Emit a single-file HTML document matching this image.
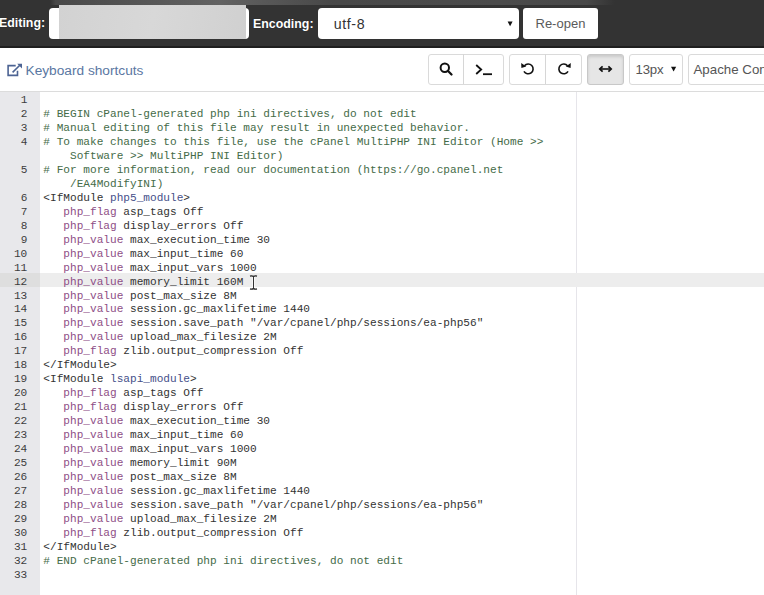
<!DOCTYPE html>
<html><head><meta charset="utf-8">
<style>
*{box-sizing:border-box}
html,body{margin:0;padding:0;width:764px;height:595px;overflow:hidden;background:#fff;font-family:"Liberation Sans",sans-serif}
#bar{position:absolute;left:0;top:0;width:764px;height:48px;background:#333}
#bar .bl{position:absolute;left:0;top:46px;width:764px;height:2px;background:#1f1f1f}
#bar .glow{position:absolute;left:50px;top:0;width:565px;height:5px;background:linear-gradient(to right,rgba(125,125,125,0),rgba(110,110,110,.35) 1%,rgba(120,120,120,.45) 12%,rgba(130,130,130,.6) 30%,rgba(120,120,120,.3) 50%,rgba(120,120,120,.35) 80%,rgba(120,120,120,.3) 95%,rgba(120,120,120,0));}
.lbl{position:absolute;color:#fff;font-weight:bold;font-size:12.4px;top:15px;line-height:16px;text-shadow:0 0 1px rgba(0,0,0,.5)}
.inp{position:absolute;background:#fff;border-radius:4px}
#blur{position:absolute;left:59px;top:5px;width:187px;height:34px;background:linear-gradient(100deg,#d2d2d2,#d8d8d8 50%,#d0d0d0)}
.sel-t{position:absolute;color:#333;font-size:14.6px;line-height:18px}
.caret{position:absolute;width:0;height:0;border-left:3px solid transparent;border-right:3px solid transparent;border-top:5px solid #222}
#tb{position:absolute;left:0;top:48px;width:764px;height:44px;background:#fff}
#tb .line{position:absolute;left:0;top:42.5px;width:764px;height:1.5px;background:#dcdcdc}
.kb{position:absolute;left:25.5px;top:13.5px;font-size:13.7px;color:#5a77a2;line-height:18px}
.btn{position:absolute;top:5.5px;height:31px;border:1px solid #dadada;border-radius:3px;background:#fff}
.btn.act{background:#e6e6e6;border-color:#c8c8c8;box-shadow:inset 0 2px 3px rgba(0,0,0,.12)}
.div{position:absolute;top:6px;width:1px;height:30px;background:#d6d6d6}
.bt{position:absolute;font-size:13px;color:#555;line-height:18px;white-space:nowrap}
#ed{position:absolute;left:0;top:92px;width:764px;height:503px;background:#fff;overflow:hidden}
#gut{position:absolute;left:0;top:0;width:39.6px;height:503px;background:#e8e8eb}
#pm{position:absolute;left:575.6px;top:0;width:1px;height:503px;background:#e6e5ea}
#al{position:absolute;left:0;width:764px;height:14px;background:#ededed}
#gal{position:absolute;left:0;width:40px;height:14px;background:#dedede}
.r,.g{position:absolute;height:14px;line-height:14px;font-family:"Liberation Mono",monospace;font-size:11.12px;white-space:pre;color:#333}
.r{left:43.3px}
.g{left:0;width:27.3px;text-align:right;color:#3d3d3d}
.c{color:#456b48}
.k{color:#8e4e86}
.m{color:#46508a}
.t{color:#333}
</style></head><body>
<div id="bar">
  <div class="glow"></div>
  <div class="bl"></div>
  <div class="lbl" style="left:-1px">Editing:</div>
  <div class="inp" style="left:49px;top:8px;width:200px;height:31px"></div>
  <div id="blur"></div>
  <div class="lbl" style="left:253px;top:15.5px">Encoding:</div>
  <div class="inp" style="left:318px;top:8px;width:201px;height:31px"></div>
  <div class="sel-t" style="left:333.8px;top:15.4px;letter-spacing:0.6px;font-size:14.2px">utf-8</div>
  <svg style="position:absolute;left:507px;top:20.5px" width="7" height="6" viewBox="0 0 7 6"><path d="M0.6 0.5H5.6L3.1 5.2Z" fill="#111"/></svg>
  <div class="inp" style="left:522.5px;top:7.5px;width:75.5px;height:31.5px;border-radius:3px"></div>
  <div class="bt" style="left:535.5px;top:15px;font-size:13px;color:#5a5a5a">Re-open</div>
</div>
<div id="tb">
  <div class="line"></div>
  <svg style="position:absolute;left:6px;top:15px" width="17" height="15" viewBox="0 0 17 15">
    <path d="M9.7 2.6H2.1V12.4H11.5V7.7" fill="none" stroke="#4c6393" stroke-width="1.6"/>
    <path d="M6.6 9.4L13.8 2.2" fill="none" stroke="#4c6393" stroke-width="1.6"/>
    <path d="M11.2 0.7H16V5.4Z" fill="#4c6393"/>
  </svg>
  <div class="kb">Keyboard shortcuts</div>

  <div class="btn" style="left:427.5px;width:76px"></div>
  <div class="div" style="left:463px"></div>
  <svg style="position:absolute;left:439px;top:14.4px" width="14" height="14" viewBox="0 0 14 14">
    <circle cx="5.8" cy="5.8" r="4.2" fill="none" stroke="#111" stroke-width="2"/>
    <path d="M8.8 8.8L12.5 12.5" stroke="#111" stroke-width="2.2" stroke-linecap="round"/>
  </svg>
  <svg style="position:absolute;left:475px;top:15.6px" width="18" height="12" viewBox="0 0 18 12">
    <path d="M1.2 1L6.2 5.5L1.2 10" fill="none" stroke="#111" stroke-width="1.8"/>
    <path d="M8 10.2H17" stroke="#111" stroke-width="1.8"/>
  </svg>

  <div class="btn" style="left:509px;width:73px"></div>
  <div class="div" style="left:544.8px"></div>
  <svg style="position:absolute;left:520px;top:14px" width="15" height="15" viewBox="0 0 15 15">
    <path d="M4.45 3.75A4.9 4.9 0 1 1 3.96 9.35" fill="none" stroke="#111" stroke-width="1.6"/><path d="M1.2 0.9L1.4 5.9L6.2 4.6Z" fill="#111"/>
  </svg>
  <svg style="position:absolute;left:556.5px;top:14px" width="15" height="15" viewBox="0 0 15 15">
    <g transform="translate(15,0) scale(-1,1)"><path d="M4.45 3.75A4.9 4.9 0 1 1 3.96 9.35" fill="none" stroke="#111" stroke-width="1.6"/><path d="M1.2 0.9L1.4 5.9L6.2 4.6Z" fill="#111"/></g>
  </svg>

  <div class="btn act" style="left:587px;width:37px"></div>
  <svg style="position:absolute;left:598px;top:17px" width="15" height="8" viewBox="0 0 15 8">
    <path d="M2.5 4H12.5" stroke="#111" stroke-width="1.6"/>
    <path d="M4.6 1.4L1.8 4L4.6 6.6M10.4 1.4L13.2 4L10.4 6.6" fill="none" stroke="#111" stroke-width="1.7"/>
  </svg>

  <div class="btn" style="left:629px;width:54px"></div>
  <div class="bt" style="left:635.5px;top:13px;font-size:13.2px;letter-spacing:-0.2px">13px</div>
  <svg style="position:absolute;left:670px;top:18px" width="7" height="6" viewBox="0 0 7 6"><path d="M1 0.8H6.2L3.6 5.4Z" fill="#111"/></svg>

  <div class="btn" style="left:688px;width:90px"></div>
  <div class="bt" style="left:693.5px;top:13.2px;font-size:13.3px">Apache Configuration</div>
</div>
<div id="ed">
  <div id="gut"></div>
  <div id="pm"></div>
  <div id="al" style="top:calc(272.95px - 92px)"></div>
  <div id="gal" style="top:calc(272.95px - 92px)"></div>
  <div id="code" style="position:absolute;left:0;top:-92px;width:764px;height:595px">
<div class="r" style="top:93.20px"></div>
<div class="r" style="top:107.15px"><span class="c">#&#160;BEGIN&#160;cPanel-generated&#160;php&#160;ini&#160;directives,&#160;do&#160;not&#160;edit</span></div>
<div class="r" style="top:121.10px"><span class="c">#&#160;Manual&#160;editing&#160;of&#160;this&#160;file&#160;may&#160;result&#160;in&#160;unexpected&#160;behavior.</span></div>
<div class="r" style="top:135.05px"><span class="c">#&#160;To&#160;make&#160;changes&#160;to&#160;this&#160;file,&#160;use&#160;the&#160;cPanel&#160;MultiPHP&#160;INI&#160;Editor&#160;(Home&#160;&gt;&gt;</span></div>
<div class="r" style="top:149.00px"><span class="c">&#160;&#160;&#160;&#160;Software&#160;&gt;&gt;&#160;MultiPHP&#160;INI&#160;Editor)</span></div>
<div class="r" style="top:162.95px"><span class="c">#&#160;For&#160;more&#160;information,&#160;read&#160;our&#160;documentation&#160;(https://go.cpanel.net</span></div>
<div class="r" style="top:176.90px"><span class="c">&#160;&#160;&#160;&#160;/EA4ModifyINI)</span></div>
<div class="r" style="top:190.85px"><span class="t">&lt;IfModule&#160;</span><span class="m">php5_module</span><span class="t">&gt;</span></div>
<div class="r" style="top:204.80px"><span class="t">&#160;&#160;&#160;</span><span class="k">php_flag</span><span class="t">&#160;asp_tags&#160;Off</span></div>
<div class="r" style="top:218.75px"><span class="t">&#160;&#160;&#160;</span><span class="k">php_flag</span><span class="t">&#160;display_errors&#160;Off</span></div>
<div class="r" style="top:232.70px"><span class="t">&#160;&#160;&#160;</span><span class="k">php_value</span><span class="t">&#160;max_execution_time&#160;30</span></div>
<div class="r" style="top:246.65px"><span class="t">&#160;&#160;&#160;</span><span class="k">php_value</span><span class="t">&#160;max_input_time&#160;60</span></div>
<div class="r" style="top:260.60px"><span class="t">&#160;&#160;&#160;</span><span class="k">php_value</span><span class="t">&#160;max_input_vars&#160;1000</span></div>
<div class="r" style="top:274.55px"><span class="t">&#160;&#160;&#160;</span><span class="k">php_value</span><span class="t">&#160;memory_limit&#160;160M</span></div>
<div class="r" style="top:288.50px"><span class="t">&#160;&#160;&#160;</span><span class="k">php_value</span><span class="t">&#160;post_max_size&#160;8M</span></div>
<div class="r" style="top:302.45px"><span class="t">&#160;&#160;&#160;</span><span class="k">php_value</span><span class="t">&#160;session.gc_maxlifetime&#160;1440</span></div>
<div class="r" style="top:316.40px"><span class="t">&#160;&#160;&#160;</span><span class="k">php_value</span><span class="t">&#160;session.save_path&#160;&quot;/var/cpanel/php/sessions/ea-php56&quot;</span></div>
<div class="r" style="top:330.35px"><span class="t">&#160;&#160;&#160;</span><span class="k">php_value</span><span class="t">&#160;upload_max_filesize&#160;2M</span></div>
<div class="r" style="top:344.30px"><span class="t">&#160;&#160;&#160;</span><span class="k">php_flag</span><span class="t">&#160;zlib.output_compression&#160;Off</span></div>
<div class="r" style="top:358.25px"><span class="t">&lt;/IfModule&gt;</span></div>
<div class="r" style="top:372.20px"><span class="t">&lt;IfModule&#160;</span><span class="m">lsapi_module</span><span class="t">&gt;</span></div>
<div class="r" style="top:386.15px"><span class="t">&#160;&#160;&#160;</span><span class="k">php_flag</span><span class="t">&#160;asp_tags&#160;Off</span></div>
<div class="r" style="top:400.10px"><span class="t">&#160;&#160;&#160;</span><span class="k">php_flag</span><span class="t">&#160;display_errors&#160;Off</span></div>
<div class="r" style="top:414.05px"><span class="t">&#160;&#160;&#160;</span><span class="k">php_value</span><span class="t">&#160;max_execution_time&#160;30</span></div>
<div class="r" style="top:428.00px"><span class="t">&#160;&#160;&#160;</span><span class="k">php_value</span><span class="t">&#160;max_input_time&#160;60</span></div>
<div class="r" style="top:441.95px"><span class="t">&#160;&#160;&#160;</span><span class="k">php_value</span><span class="t">&#160;max_input_vars&#160;1000</span></div>
<div class="r" style="top:455.90px"><span class="t">&#160;&#160;&#160;</span><span class="k">php_value</span><span class="t">&#160;memory_limit&#160;90M</span></div>
<div class="r" style="top:469.85px"><span class="t">&#160;&#160;&#160;</span><span class="k">php_value</span><span class="t">&#160;post_max_size&#160;8M</span></div>
<div class="r" style="top:483.80px"><span class="t">&#160;&#160;&#160;</span><span class="k">php_value</span><span class="t">&#160;session.gc_maxlifetime&#160;1440</span></div>
<div class="r" style="top:497.75px"><span class="t">&#160;&#160;&#160;</span><span class="k">php_value</span><span class="t">&#160;session.save_path&#160;&quot;/var/cpanel/php/sessions/ea-php56&quot;</span></div>
<div class="r" style="top:511.70px"><span class="t">&#160;&#160;&#160;</span><span class="k">php_value</span><span class="t">&#160;upload_max_filesize&#160;2M</span></div>
<div class="r" style="top:525.65px"><span class="t">&#160;&#160;&#160;</span><span class="k">php_flag</span><span class="t">&#160;zlib.output_compression&#160;Off</span></div>
<div class="r" style="top:539.60px"><span class="t">&lt;/IfModule&gt;</span></div>
<div class="r" style="top:553.55px"><span class="c">#&#160;END&#160;cPanel-generated&#160;php&#160;ini&#160;directives,&#160;do&#160;not&#160;edit</span></div>
<div class="r" style="top:567.50px"></div>
<div class="g" style="top:93.20px">1</div>
<div class="g" style="top:107.15px">2</div>
<div class="g" style="top:121.10px">3</div>
<div class="g" style="top:135.05px">4</div>
<div class="g" style="top:162.95px">5</div>
<div class="g" style="top:190.85px">6</div>
<div class="g" style="top:204.80px">7</div>
<div class="g" style="top:218.75px">8</div>
<div class="g" style="top:232.70px">9</div>
<div class="g" style="top:246.65px">10</div>
<div class="g" style="top:260.60px">11</div>
<div class="g" style="top:274.55px">12</div>
<div class="g" style="top:288.50px">13</div>
<div class="g" style="top:302.45px">14</div>
<div class="g" style="top:316.40px">15</div>
<div class="g" style="top:330.35px">16</div>
<div class="g" style="top:344.30px">17</div>
<div class="g" style="top:358.25px">18</div>
<div class="g" style="top:372.20px">19</div>
<div class="g" style="top:386.15px">20</div>
<div class="g" style="top:400.10px">21</div>
<div class="g" style="top:414.05px">22</div>
<div class="g" style="top:428.00px">23</div>
<div class="g" style="top:441.95px">24</div>
<div class="g" style="top:455.90px">25</div>
<div class="g" style="top:469.85px">26</div>
<div class="g" style="top:483.80px">27</div>
<div class="g" style="top:497.75px">28</div>
<div class="g" style="top:511.70px">29</div>
<div class="g" style="top:525.65px">30</div>
<div class="g" style="top:539.60px">31</div>
<div class="g" style="top:553.55px">32</div>
<div class="g" style="top:567.50px">33</div>
  </div>
  <svg style="position:absolute;left:249px;top:181.5px" width="9" height="17" viewBox="0 0 9 17">
    <path d="M4.5 2V14" stroke="#fff" stroke-width="2.6" opacity=".7"/>
    <path d="M1 2.1Q3 1.6 4.5 2.4Q6 1.6 8 2.1M1 14.9Q3 15.4 4.5 14.6Q6 15.4 8 14.9" fill="none" stroke="#222" stroke-width="1.2"/>
    <path d="M4.5 2.4V14.6" stroke="#333" stroke-width="1"/>
  </svg>
</div>
</body></html>
